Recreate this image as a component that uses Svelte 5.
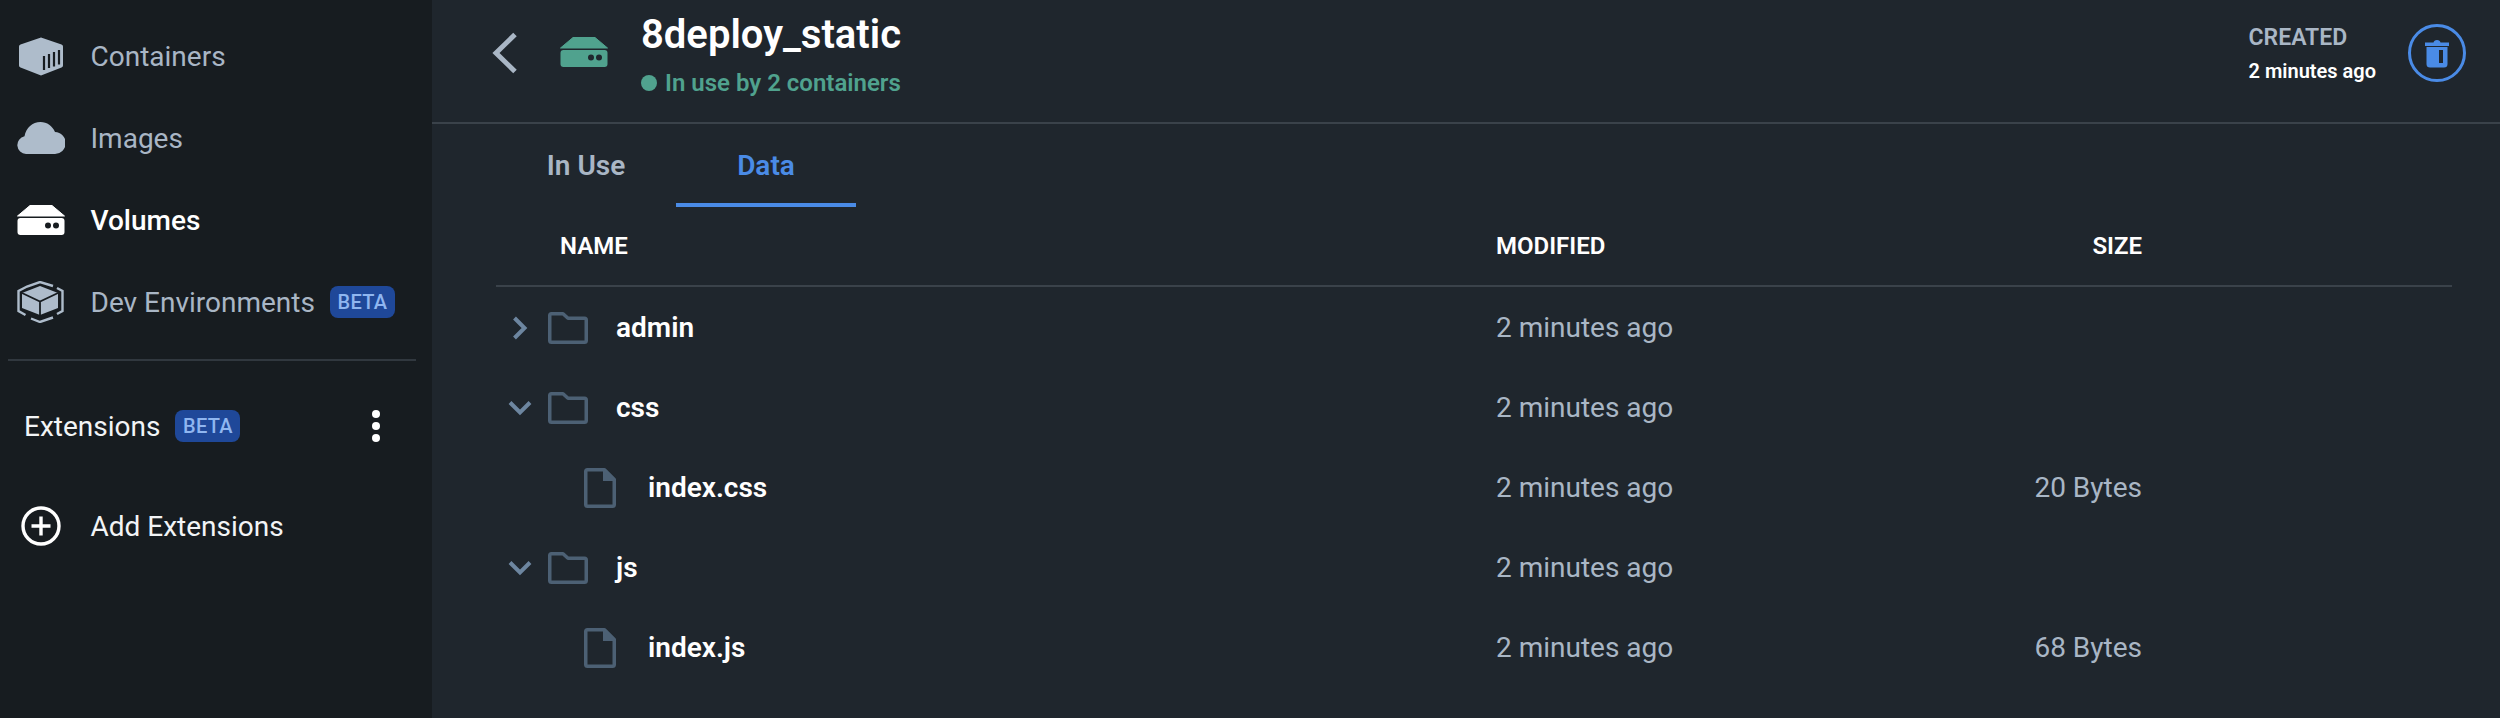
<script>
  const nav = [
    { id: "containers", label: "Containers" },
    { id: "images", label: "Images" },
    { id: "volumes", label: "Volumes", active: true },
    { id: "dev", label: "Dev Environments", beta: true }
  ];
  const rows = [
    { name: "admin", kind: "folder", open: false, modified: "2 minutes ago", size: "" },
    { name: "css", kind: "folder", open: true, modified: "2 minutes ago", size: "" },
    { name: "index.css", kind: "file", modified: "2 minutes ago", size: "20 Bytes" },
    { name: "js", kind: "folder", open: true, modified: "2 minutes ago", size: "" },
    { name: "index.js", kind: "file", modified: "2 minutes ago", size: "68 Bytes" }
  ];
</script>

{#snippet volumeIcon(color, hole)}
  <svg width="48" height="30" viewBox="0 0 48 30">
    <path d="M13 0.5h22l12.500 10.500h-47z" fill={color} stroke={color} stroke-linejoin="round" />
    <rect x="0.5" y="13" width="47" height="17" rx="3" fill={color} />
    <circle cx="31" cy="20.5" r="3" fill={hole} />
    <circle cx="39" cy="20.5" r="3" fill={hole} />
  </svg>
{/snippet}

<div class="app">
  <aside class="sidebar">
    <nav class="nav">
      {#each nav as item}
        <div class="nav-item" class:active={item.active}>
          <span class="nav-icon">
            {#if item.id === "containers"}
              <svg class="box" width="44" height="39" viewBox="0 0 44 39">
                <path d="M22 0.5l20.500 7q1.500 .5 1.500 2v19q0 1.500-1.500 2L22 38.500 1.500 30.500q-1.500-.5-1.500-2v-19q0-1.500 1.500-2z" fill="#aebccb" />
                <path d="M25 33V19M30 31V17M35 29.500V15M40 27.500V13" stroke="#171c20" stroke-width="2.200" fill="none" />
              </svg>
            {:else if item.id === "images"}
              <svg width="48" height="32" viewBox="0 0 48 32">
                <path d="M9 32a9 9 0 0 1-1.500-17.800C9 6 15.500 0 23.500 0c6.500 0 12 4 14.500 10a11 11 0 0 1-.5 22z" fill="#aebccb" />
              </svg>
            {:else if item.id === "volumes"}
              {@render volumeIcon("#ffffff", "#171c20")}
            {:else}
              <svg width="48" height="42" viewBox="0 0 48 42">
                <path d="M23 5l18 7v15L23 34 5 27V12z" fill="#aebccb" />
                <path d="M5 12l18 8.500L41 12M23 20.500V34" stroke="#171c20" stroke-width="1.800" fill="none" />
                <path d="M36 5l-13-4-13 4.500L1.500 10v20l7 4M14 37.500l9 3.500 13-4.500M40 33l5.500-3V10L40 7" stroke="#aebccb" stroke-width="2.400" fill="none" />
              </svg>
            {/if}
          </span>
          <span>{item.label}</span>
          {#if item.beta}<span class="beta">BETA</span>{/if}
        </div>
      {/each}
    </nav>
    <div class="divider"></div>
    <div class="ext-head">
      <span>Extensions</span>
      <span class="beta">BETA</span>
      <span class="dots"><i></i><i></i><i></i></span>
    </div>
    <div class="nav-item add">
      <span class="nav-icon">
        <svg width="40" height="40" viewBox="0 0 40 40">
          <circle cx="20" cy="20" r="18" fill="none" stroke="#fff" stroke-width="3.400" />
          <path d="M20 10.500v19M10.500 20h19" stroke="#fff" stroke-width="3.400" />
        </svg>
      </span>
      <span>Add Extensions</span>
    </div>
  </aside>

  <main class="main">
    <header class="header">
      <svg class="back" width="26" height="42" viewBox="0 0 26 42">
        <path d="M23 2.500L4 21l19 18.500" fill="none" stroke="#a9b6c5" stroke-width="5" />
      </svg>
      <span class="vol">{@render volumeIcon("#50a28e", "#1f262d")}</span>
      <div class="title-block">
        <h1>8deploy_static</h1>
        <div class="status"><i></i>In use by 2 containers</div>
      </div>
      <div class="created">
        <div class="created-label">CREATED</div>
        <div class="created-value">2 minutes ago</div>
      </div>
      <span class="trash">
        <svg width="24" height="30" viewBox="0 0 24 30">
          <path d="M0 4.500h8.500Q9 2 12 2t3.500 2.500H24V8H0z" fill="#4a8be6" />
          <path d="M1.500 9h21v17q0 3.500-3.500 3.500H5q-3.500 0-3.500-3.500z" fill="#4a8be6" />
          <rect x="14" y="12" width="4" height="13" fill="#1f262d" />
        </svg>
      </span>
    </header>

    <div class="tabs">
      <div class="tab">In Use</div>
      <div class="tab selected">Data</div>
    </div>

    <div class="table">
      <div class="row head">
        <div class="name-cell">NAME</div>
        <div>MODIFIED</div>
        <div class="size">SIZE</div>
      </div>
      {#each rows as row}
        <div class="row">
          <div class="name-cell">
            {#if row.kind === "folder"}
              <span class="chev">
                {#if row.open}
                  <svg width="24" height="16" viewBox="0 0 24 16"><path d="M2 2.500l10 10 10-10" fill="none" stroke="#6d86a0" stroke-width="4" /></svg>
                {:else}
                  <svg width="16" height="24" viewBox="0 0 16 24"><path d="M2.500 2l10 10-10 10" fill="none" stroke="#6d86a0" stroke-width="4" /></svg>
                {/if}
              </span>
              <svg class="folder" width="40" height="32" viewBox="0 0 40 32">
                <path d="M1.750 3.500q0-1.750 1.750-1.750h11.500L20 6.250h16.500q1.750 0 1.750 1.750v20.500q0 1.750-1.750 1.750h-33q-1.750 0-1.750-1.750z" fill="none" stroke="#4c6074" stroke-width="3.500" stroke-linejoin="round" />
              </svg>
            {:else}
              <svg class="file" width="32" height="40" viewBox="0 0 32 40">
                <path d="M1.750 3.500q0-1.750 1.750-1.750h17l9.750 9.750V36.500q0 1.750-1.750 1.750h-25q-1.750 0-1.750-1.750z" fill="none" stroke="#4c6074" stroke-width="3.500" stroke-linejoin="round" />
                <path d="M19 1.500h1.500l10 10V13H19z" fill="#4c6074" />
              </svg>
            {/if}
            <span class="fname">{row.name}</span>
          </div>
          <div class="muted">{row.modified}</div>
          <div class="size muted">{row.size}</div>
        </div>
      {/each}
    </div>
  </main>
</div>

<style>
  :global(body) {
    margin: 0;
    background: #1f262d;
  }
  .app {
    display: flex;
    height: 718px;
    overflow: hidden;
    font-family: Roboto, "Liberation Sans", sans-serif;
    color: #fff;
  }
  .sidebar {
    width: 432px;
    flex: none;
    background: #171c20;
    padding-top: 15px;
    box-sizing: border-box;
  }
  .nav-item {
    height: 82px;
    display: flex;
    align-items: center;
    font-size: 28px;
    color: #a9b6c5;
    padding-left: 17px;
  }
  .nav-item.active {
    color: #fff;
    font-weight: 500;
  }
  .nav-icon {
    width: 73.500px;
    display: flex;
    align-items: center;
    box-sizing: border-box;
  }
  .box {
    margin-left: 2px;
  }
  .beta {
    margin-left: 15px;
    width: 65px;
    height: 32px;
    border-radius: 8px;
    background: #1f4899;
    color: #8fb6f0;
    font-size: 20px;
    font-weight: 500;
    display: flex;
    align-items: center;
    justify-content: center;
    letter-spacing: 0.3px;
  }
  .divider {
    height: 2px;
    margin: 16px 16px 0 8px;
    background: #31383f;
  }
  .ext-head {
    display: flex;
    align-items: center;
    height: 32px;
    margin-top: 49px;
    padding-left: 24px;
    font-size: 28px;
    color: #f2f4f6;
  }
  .dots {
    margin-left: auto;
    margin-right: 52px;
    display: flex;
    flex-direction: column;
    gap: 4px;
  }
  .dots i {
    width: 8px;
    height: 8px;
    border-radius: 50%;
    background: #fff;
  }
  .add {
    color: #f2f4f6;
    margin-top: 43px;
    padding-left: 21px;
  }
  .add .nav-icon {
    width: 69.500px;
  }
  .main {
    flex: 1;
    min-width: 0;
  }
  .header {
    height: 122px;
    border-bottom: 2px solid #3a424a;
    display: flex;
    align-items: flex-start;
    padding-left: 60px;
    padding-right: 34px;
  }
  .back {
    margin-top: 32px;
    flex: none;
  }
  .vol {
    margin: 37px 0 0 42px;
    display: block;
    line-height: 0;
  }
  .title-block {
    margin-left: 33px;
  }
  h1 {
    margin: 12px 0 0;
    font-size: 40px;
    line-height: 46px;
    font-weight: 600;
  }
  .status {
    margin-top: 11px;
    display: flex;
    align-items: center;
    font-size: 24px;
    line-height: 28px;
    font-weight: 600;
    color: #50a28e;
  }
  .status i {
    width: 16px;
    height: 16px;
    border-radius: 50%;
    background: #50a28e;
    margin-right: 8px;
  }
  .created {
    margin-left: auto;
    margin-top: 25px;
  }
  .created-label {
    font-size: 23px;
    line-height: 26px;
    font-weight: 600;
    color: #a9b6c5;
  }
  .created-value {
    margin-top: 8px;
    font-size: 20px;
    line-height: 24px;
    font-weight: 600;
  }
  .trash {
    margin: 24px 0 0 32px;
    width: 58px;
    height: 58px;
    border: 3px solid #4a8be6;
    border-radius: 50%;
    box-sizing: border-box;
    display: flex;
    align-items: center;
    justify-content: center;
  }
  .tabs {
    display: flex;
    height: 83px;
    padding-left: 64px;
  }
  .tab {
    width: 180px;
    display: flex;
    align-items: center;
    justify-content: center;
    font-size: 28px;
    font-weight: 600;
    color: #a9b6c5;
    box-sizing: border-box;
    border-bottom: 4px solid transparent;
    padding-top: 3px;
  }
  .tab.selected {
    color: #4a8be6;
    border-bottom-color: #4a8be6;
  }
  .table {
    margin: 0 48px 0 64px;
  }
  .row {
    display: grid;
    grid-template-columns: 1000px 1fr 200px;
    align-items: center;
    height: 80px;
    font-size: 28px;
    padding-right: 310px;
    padding-top: 1px;
    box-sizing: border-box;
  }
  .row.head {
    height: 80px;
    border-bottom: 2px solid #3a424a;
    font-size: 24px;
    font-weight: 600;
    padding-top: 0;
  }
  .row.head .name-cell {
    padding-left: 64px;
  }
  .name-cell {
    display: flex;
    align-items: center;
  }
  .chev {
    width: 48px;
    margin-right: 4px;
    display: flex;
    justify-content: center;
  }
  .folder {
    flex: none;
  }
  .file {
    margin-left: 88px;
    flex: none;
  }
  .fname {
    margin-left: 28px;
    font-weight: 600;
  }
  .file + .fname {
    margin-left: 32px;
  }
  .muted {
    color: #a9b6c5;
  }
  .size {
    text-align: right;
  }
</style>
